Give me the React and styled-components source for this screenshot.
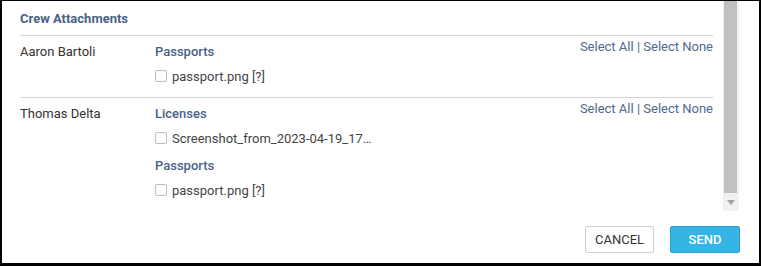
import React from 'react'
import styled, { createGlobalStyle } from 'styled-components'

const GlobalStyle = createGlobalStyle`
  body {
    margin: 0;
    background: #fff;
    font-family: Roboto, "Liberation Sans", Arial, sans-serif;
  }
`

const crew = [
  {
    name: 'Aaron Bartoli',
    groups: [{ title: 'Passports', files: ['passport.png [?]'] }],
  },
  {
    name: 'Thomas Delta',
    groups: [
      { title: 'Licenses', files: ['Screenshot_from_2023-04-19_17…'] },
      { title: 'Passports', files: ['passport.png [?]'] },
    ],
  },
]

const App = () => {
  return (
    <>
      <GlobalStyle />
      <Frame>
        <Body>
          <Content>
            <Heading>Crew Attachments</Heading>
            {crew.map(member => (
              <CrewRow key={member.name}>
                <Name>{member.name}</Name>
                <Groups>
                  {member.groups.map(group => (
                    <Group key={group.title}>
                      <GroupTitle>{group.title}</GroupTitle>
                      {group.files.map(file => (
                        <FileRow key={file}>
                          <Check />
                          <FileName>{file}</FileName>
                        </FileRow>
                      ))}
                    </Group>
                  ))}
                </Groups>
                <SelectLinks>
                  <LinkText>Select All</LinkText> | <LinkText>Select None</LinkText>
                </SelectLinks>
              </CrewRow>
            ))}
          </Content>
          <ScrollTrack>
            <ScrollThumb />
            <ScrollArrow>
              <svg width='8' height='5' viewBox='0 0 8 5'>
                <path d='M0 0 L8 0 L4 5 Z' fill='#a3a3a3' />
              </svg>
            </ScrollArrow>
          </ScrollTrack>
        </Body>
        <Footer>
          <Button>CANCEL</Button>
          <Button primary>SEND</Button>
        </Footer>
      </Frame>
    </>
  )
}

const Frame = styled.div`
  width: 761px;
  height: 266px;
  box-sizing: border-box;
  border-style: solid;
  border-color: #000;
  border-width: 1px 2px 3px 2px;
  display: flex;
  flex-direction: column;
  background: #fff;
`

const Body = styled.div`
  display: flex;
  height: 210px;
  overflow: hidden;
  padding-right: 20px;
`

const Content = styled.div`
  flex: 1;
  padding: 8px 10px 0 18px;
  min-width: 0;
`

const Heading = styled.div`
  font-size: 13px;
  line-height: 20px;
  font-weight: 700;
  color: #4a6286;
  margin-bottom: 6px;
`

const CrewRow = styled.div`
  display: grid;
  grid-template-columns: 135px 1fr auto;
  border-top: 1px solid #d4d4d4;
  padding: 6px 0 11px;
`

const Name = styled.div`
  font-size: 13px;
  line-height: 20px;
  color: #333;
`

const Groups = styled.div`
  display: flex;
  flex-direction: column;
  gap: 8px;
`

const Group = styled.div`
  display: flex;
  flex-direction: column;
  gap: 4px;
`

const GroupTitle = styled.div`
  font-size: 13px;
  line-height: 20px;
  font-weight: 500;
  color: #4a6286;
`

const FileRow = styled.label`
  display: flex;
  align-items: center;
  gap: 5px;
  height: 20px;
`

const Check = styled.span`
  width: 12px;
  height: 12px;
  box-sizing: border-box;
  border: 1px solid #bdbdbd;
  border-radius: 2px;
  background: #fff;
`

const FileName = styled.span`
  font-size: 13px;
  color: #444;
`

const SelectLinks = styled.div`
  margin-top: -5px;
  font-size: 13px;
  line-height: 20px;
  color: #4f6a8e;
`

const LinkText = styled.span`
  cursor: pointer;
`

const ScrollTrack = styled.div`
  width: 16px;
  background: #f1f1f1;
  display: flex;
  flex-direction: column;
`

const ScrollThumb = styled.div`
  height: 192px;
  margin: 0 2px 0 1px;
  background: #c1c1c1;
`

const ScrollArrow = styled.div`
  flex: 1;
  display: flex;
  align-items: center;
  justify-content: center;
`

const Footer = styled.div`
  display: flex;
  justify-content: flex-end;
  gap: 16px;
  padding: 15px 19px 10px 0;
`

const Button = styled.button`
  height: 27px;
  width: ${p => (p.primary ? '70px' : '69px')};
  box-sizing: border-box;
  border-radius: 2px;
  border: 1px solid ${p => (p.primary ? '#2ba2d4' : '#cfcfcf')};
  background: ${p => (p.primary ? '#35b4e6' : '#fff')};
  color: ${p => (p.primary ? '#fff' : '#333')};
  font-family: Roboto, "Liberation Sans", Arial, sans-serif;
  font-size: 13px;
  font-weight: ${p => (p.primary ? 500 : 400)};
  padding: 0;
  cursor: pointer;
`

export default App
